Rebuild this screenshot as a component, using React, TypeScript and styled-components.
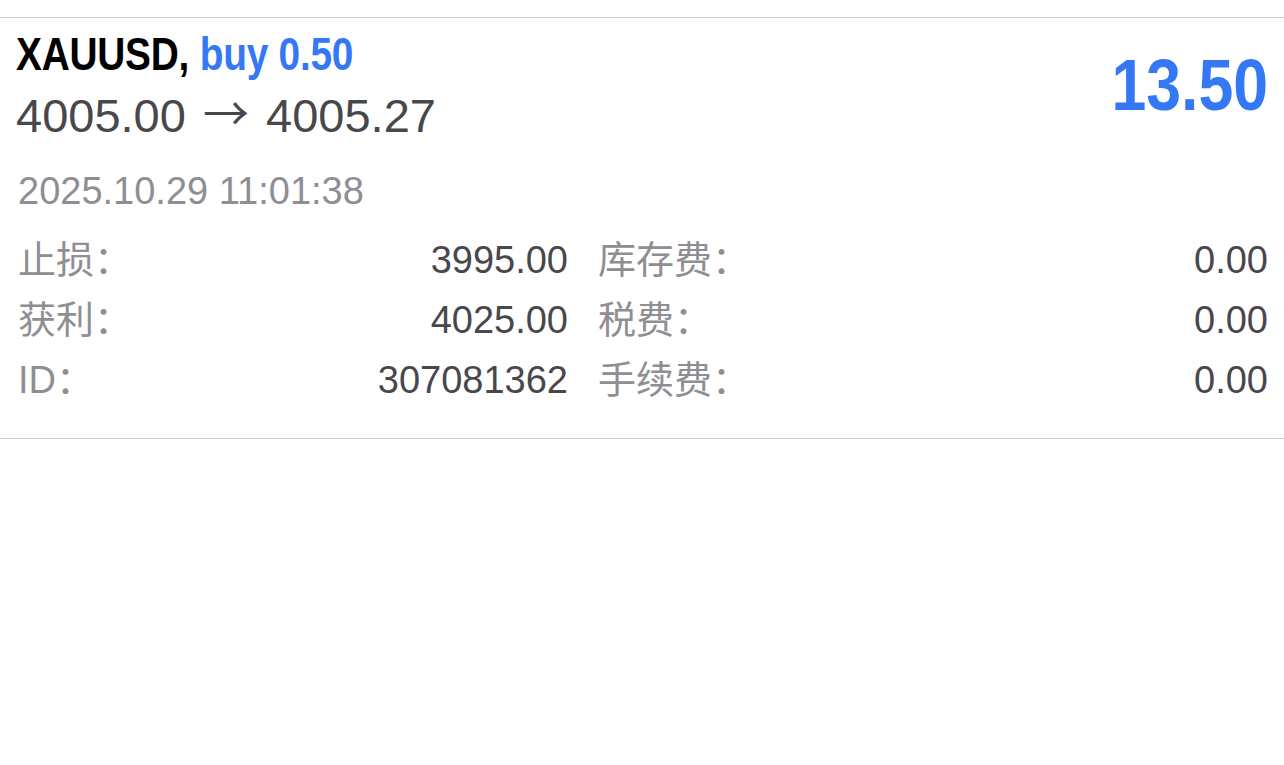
import React from "react";
import styled, { createGlobalStyle } from "styled-components";

const GlobalStyle = createGlobalStyle`
  html, body {
    margin: 0;
    padding: 0;
    background: #ffffff;
  }
  body {
    font-family: "Liberation Sans", "Noto Sans CJK SC", sans-serif;
  }
`;

const BLUE = "#3478f6";

const Page = styled.div`
  padding-top: 17px;
  width: 1284px;
`;

const PositionCard = styled.div`
  border-top: 1px solid #cbcbcf;
  border-bottom: 1px solid #cbcbcf;
  padding: 13px 16px 28px 16px;
`;

const HeadRow = styled.div`
  display: flex;
  justify-content: space-between;
  align-items: center;
`;

const HeadLeft = styled.div`
  display: flex;
  flex-direction: column;
  align-items: flex-start;
`;

// condensed bold face: the system font here is narrower than Arial
const Title = styled.div`
  display: inline-block;
  font-weight: 700;
  font-size: 46px;
  line-height: 46px;
  letter-spacing: -0.3px;
  color: #000000;
  white-space: nowrap;
  transform: scaleX(0.845);
  transform-origin: left center;
`;

const Side = styled.span`
  color: ${BLUE};
`;

const Prices = styled.div`
  margin-top: 16px;
  font-size: 47px;
  line-height: 46px;
  height: 46px;
  color: #48484c;
  white-space: nowrap;
`;

const Arrow = styled.span`
  font-family: "Noto Sans CJK SC", sans-serif;
  font-size: 46px;
  line-height: 0;
  margin: 0 4px;
  position: relative;
  top: -2px;
`;

const Profit = styled.div`
  font-weight: 700;
  font-size: 72px;
  line-height: 72px;
  color: ${BLUE};
  transform: scaleX(0.87);
  transform-origin: right center;
`;

const OpenTime = styled.div`
  margin-top: 33px;
  padding-left: 2px;
  font-size: 38px;
  line-height: 38px;
  color: #8e8e93;
`;

const Details = styled.div`
  margin-top: 20px;
  padding-left: 2px;
  display: grid;
  grid-template-columns: 550px 1fr;
  column-gap: 30px;
`;

const Cell = styled.div`
  display: flex;
  justify-content: space-between;
  align-items: baseline;
  height: 60px;
  line-height: 60px;
  font-size: 38px;
`;

const Label = styled.span`
  color: #8e8e93;
`;

const Value = styled.span`
  color: #48484c;
`;

const rows: Array<[string, string, string, string]> = [
  ["止损：", "3995.00", "库存费：", "0.00"],
  ["获利：", "4025.00", "税费：", "0.00"],
  ["ID：", "307081362", "手续费：", "0.00"],
];

export default function App() {
  return (
    <>
      <GlobalStyle />
      <Page>
        <PositionCard>
          <HeadRow>
            <HeadLeft>
              <Title>
                XAUUSD, <Side>buy 0.50</Side>
              </Title>
              <Prices>
                4005.00 <Arrow>→</Arrow> 4005.27
              </Prices>
            </HeadLeft>
            <Profit>13.50</Profit>
          </HeadRow>
          <OpenTime>2025.10.29 11:01:38</OpenTime>
          <Details>
            {rows.map(([l1, v1, l2, v2]) => (
              <React.Fragment key={l1}>
                <Cell>
                  <Label>{l1}</Label>
                  <Value>{v1}</Value>
                </Cell>
                <Cell>
                  <Label>{l2}</Label>
                  <Value>{v2}</Value>
                </Cell>
              </React.Fragment>
            ))}
          </Details>
        </PositionCard>
      </Page>
    </>
  );
}
